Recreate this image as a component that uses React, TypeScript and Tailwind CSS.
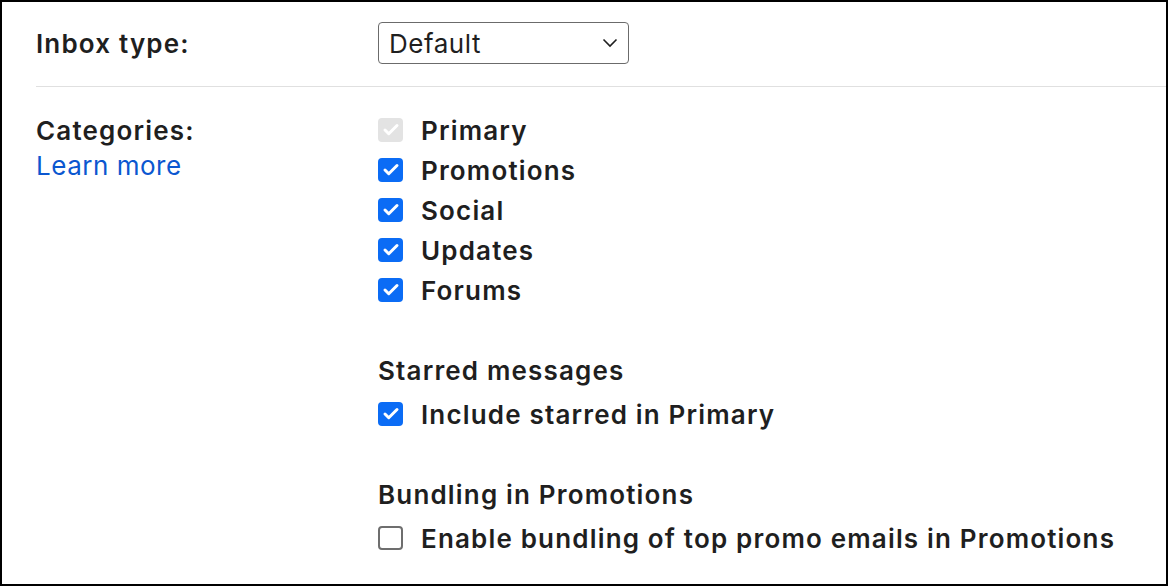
import { Check } from "lucide-react";

type Item = { label: string; checked: boolean; disabled?: boolean };

const categories: Item[] = [
  { label: "Primary", checked: true, disabled: true },
  { label: "Promotions", checked: true },
  { label: "Social", checked: true },
  { label: "Updates", checked: true },
  { label: "Forums", checked: true },
];

function Box({ checked, disabled }: { checked: boolean; disabled?: boolean }) {
  if (disabled) {
    return (
      <span className="w-[25px] h-[24px] rounded-[4px] bg-[#e3e3e3] flex items-center justify-center shrink-0">
        <Check className="w-[18px] h-[18px] text-white" strokeWidth={4} />
      </span>
    );
  }
  if (checked) {
    return (
      <span className="w-[25px] h-[24px] rounded-[4px] bg-[#0b6cf5] flex items-center justify-center shrink-0">
        <Check className="w-[18px] h-[18px] text-white" strokeWidth={4} />
      </span>
    );
  }
  return (
    <span className="w-[25px] h-[24px] rounded-[4px] border-2 border-[#6e6e6e] bg-white shrink-0" />
  );
}

function Row({ item, h = "h-[40px]" }: { item: Item; h?: string }) {
  return (
    <div className={`flex items-center gap-[18px] ${h}`}>
      <Box checked={item.checked} disabled={item.disabled} />
      <span className="font-semibold tracking-[0.045em]">{item.label}</span>
    </div>
  );
}

export default function App() {
  return (
    <div
      className="w-[1168px] h-[586px] border-2 border-black bg-white text-[#1f1f1f] text-[26px] overflow-hidden"
      style={{ fontFamily: "Inter, 'Noto Sans', sans-serif" }}
    >
      {/* Inbox type */}
      <div className="flex items-center pl-[34px] pt-[20px]">
        <div className="w-[342px] font-semibold tracking-[0.045em]">Inbox type:</div>
        <div className="w-[251px] h-[42px] border border-[#6b6b6b] rounded-[4px] flex items-center justify-between pl-[10px] pr-[10px]">
          <span className="tracking-[0.02em]">Default</span>
          <svg width="16" height="10" viewBox="0 0 16 10" fill="none">
            <path d="M1.5 1.5 L8 8 L14.5 1.5" stroke="#1f1f1f" strokeWidth="1.6" />
          </svg>
        </div>
      </div>

      <div className="ml-[34px] mt-[22px] border-t border-[#e0e0e0]" />

      {/* Categories */}
      <div className="flex pl-[34px] pt-[23px]">
        <div className="w-[342px] shrink-0">
          <div className="h-[40px] flex items-center font-semibold tracking-[0.045em]">Categories:</div>
          <a className="block leading-[32px] text-[#0b57d0] tracking-[0.02em] cursor-pointer">Learn more</a>
        </div>
        <div className="flex flex-col">
          {categories.map((c) => (
            <Row key={c.label} item={c} />
          ))}

          <div className="mt-[40px] h-[40px] flex items-center font-semibold tracking-[0.045em]">
            Starred messages
          </div>
          <Row item={{ label: "Include starred in Primary", checked: true }} h="h-[48px]" />

          <div className="mt-[36px] h-[40px] flex items-center font-semibold tracking-[0.045em]">
            Bundling in Promotions
          </div>
          <Row
            item={{ label: "Enable bundling of top promo emails in Promotions", checked: false }}
            h="h-[48px]"
          />
        </div>
      </div>
    </div>
  );
}
